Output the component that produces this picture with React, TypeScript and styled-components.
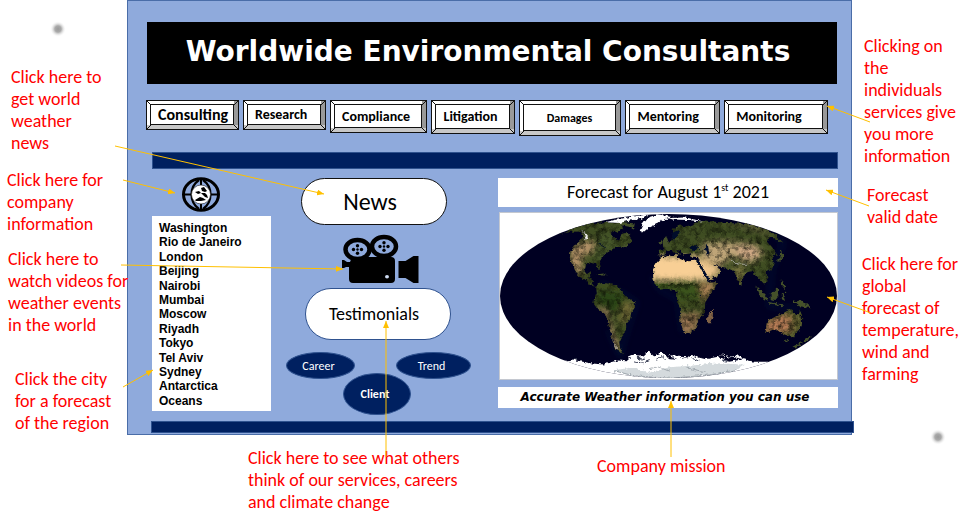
import React from "react";
import styled, { createGlobalStyle } from "styled-components";

const GlobalStyle = createGlobalStyle`
  *, *::before, *::after { box-sizing: border-box; }
  body { margin: 0; background: #fff; }
  button { font: inherit; cursor: pointer; }
`;

const humanist = `Carlito, Lato, sans-serif`;
const navy = "#002060";
const red = "#ff0000";

const Page = styled.div`
  position: relative;
  min-height: 100vh;
  overflow: hidden;
  font-family: ${humanist};
`;

const Upper = styled.div`
  display: grid;
  grid-template-columns: 127px minmax(0, 1fr) 121px;
`;

const NoteColumn = styled.aside<{ $top: number }>`
  position: relative;
  z-index: 1;
  padding-top: ${(p) => p.$top}px;
`;

const Note = styled.p<{ $indent?: number; $before?: number }>`
  margin: ${(p) => p.$before ?? 0}px 0 0 ${(p) => p.$indent ?? 0}px;
  color: ${red};
  font-size: 18px;
  line-height: 22px;
  white-space: pre;
`;

const Site = styled.main`
  display: flex;
  flex-direction: column;
  background: #8faadc;
  border: 1px solid #4a6da8;
  min-height: 435px;
`;

const Banner = styled.header`
  margin: 21px 14px 0 19px;
  background: #000;
  color: #fff;
  height: 62px;
  display: flex;
  align-items: center;
  justify-content: center;
`;

const Title = styled.h1`
  margin: 0 8px 2px 0;
  font: bold 28px/36px "DejaVu Sans", sans-serif;
  white-space: nowrap;
`;

const Services = styled.nav`
  display: flex;
  align-items: flex-start;
  gap: 4px;
  height: 68px;
  padding: 16px 23px 0 18px;
`;

const Bevel = styled.button<{ $grow: number; $height: number; $size: number; $center?: boolean }>`
  flex: ${(p) => p.$grow} 1 0;
  min-width: 0;
  height: ${(p) => p.$height}px;
  padding: 3px 4px 4px 3px;
  border: 1px solid #111;
  background:
    linear-gradient(to bottom right, transparent 42%, #111 42% 58%, transparent 58%) left bottom / 4px 4px no-repeat,
    linear-gradient(to top right, transparent 42%, #111 42% 58%, transparent 58%) right bottom / 4px 4px no-repeat,
    linear-gradient(to bottom right, transparent 42%, #111 42% 58%, transparent 58%) right top / 4px 4px no-repeat,
    linear-gradient(to top right, transparent 42%, #111 42% 58%, transparent 58%) left top / 4px 4px no-repeat,
    linear-gradient(#c8c8c8, #c8c8c8) left bottom / 100% 4px no-repeat,
    linear-gradient(#999, #999) right top / 4px 100% no-repeat,
    #fff;
  color: #000;

  span {
    display: flex;
    align-items: center;
    justify-content: ${(p) => (p.$center ? "center" : "flex-start")};
    height: 100%;
    padding: 0 7px;
    border: 1px solid #111;
    background: #fff;
    font-size: ${(p) => p.$size}px;
    font-weight: bold;
  }
`;

const Rule = styled.div<{ $height: number; $bleed?: boolean }>`
  height: ${(p) => p.$height}px;
  margin: ${(p) => (p.$bleed ? "0 -3px 1px 23px" : "0 13px 0 24px")};
  background: ${navy};
  border: 1px solid #2f528f;
`;

const Body = styled.div`
  display: grid;
  grid-template-columns: minmax(0, 119fr) minmax(0, 227fr) minmax(0, 340fr);
  margin: 0 13px 0 24px;
  padding-top: 8px;
  height: 252px;
`;

const Left = styled.section`
  display: flex;
  flex-direction: column;
`;

const GlobeButton = styled.button`
  display: block;
  align-self: center;
  margin: 0 21px 4px 0;
  padding: 0;
  border: 0;
  background: none;
  height: 35px;
`;

const Cities = styled.ul`
  display: flex;
  flex-direction: column;
  justify-content: space-between;
  height: 195px;
  margin: 0;
  padding: 5px 7px 3px;
  list-style: none;
  background: #fff;
  font: bold 12px/14px "Liberation Sans", Arial, sans-serif;
  a { color: #000; text-decoration: none; }
`;

const Middle = styled.section`
  display: flex;
  flex-direction: column;
  padding: 1px 27px 0 15px;
`;

const Stack = styled.div`
  display: flex;
  flex-direction: column;
  padding: 0 20px 0 15px;
`;

const Pill = styled.button<{ $size: number; $height: number; $end?: boolean }>`
  align-self: ${(p) => (p.$end ? "flex-end" : "flex-start")};
  width: 146px;
  height: ${(p) => p.$height}px;
  padding: 0 8px 0 0;
  border: 1px solid ${(p) => (p.$end ? "#2f528f" : "#111")};
  border-radius: 26px;
  background: #fff;
  color: #000;
  font-size: ${(p) => p.$size}px;
`;

const VideoButton = styled.button`
  padding: 0;
  margin: 9px 0 4px;
  border: 0;
  background: none;
  svg { display: block; width: 100%; height: 50px; }
`;

const Ovals = styled.div`
  display: grid;
  grid-template-columns: 69px 75px;
  justify-content: space-between;
  align-items: center;
  padding-top: 12px;
`;

const Oval = styled.button<{ $client?: boolean }>`
  height: ${(p) => (p.$client ? 42 : 27)}px;
  width: ${(p) => (p.$client ? "68px" : "100%")};
  ${(p) => p.$client && "grid-column: 1 / -1; justify-self: center; margin: -6px 3px 0 0;"}
  padding: 0 4px 0 0;
  border: 1px solid #2f528f;
  border-radius: 50%;
  background: ${navy};
  color: #fff;
  font-size: 12px;
  font-weight: ${(p) => (p.$client ? "bold" : "normal")};
`;

const Right = styled.section`
  display: flex;
  flex-direction: column;
  padding-top: 1px;
`;

const Forecast = styled.h2`
  margin: 0 0 5px;
  background: #fff;
  font-size: 18px;
  font-weight: normal;
  line-height: 29px;
  text-align: center;
  sup { font-size: 10px; line-height: 1px; }
`;

const MapFrame = styled.figure`
  margin: 0 0 7px 1px;
  height: 168px;
  background: #fff;
  border: 1px solid #c4c8d0;
  svg { display: block; width: 100%; height: 100%; }
`;

const Mission = styled.p`
  margin: 0;
  padding-right: 6px;
  background: #fff;
  font: italic bold 12px/21px "DejaVu Sans", sans-serif;
  text-align: center;
`;

const Lower = styled.footer`
  display: grid;
  grid-template-columns: 248fr 349fr 376fr;
  padding-top: 12px;
`;

const Pointers = styled.svg`
  position: absolute;
  left: 0;
  top: 0;
  width: 100%;
  height: 514px;
  pointer-events: none;
  z-index: 2;
`;

const services = [
  { name: "Consulting", grow: 93, height: 30, size: 16 },
  { name: "Research", grow: 82, height: 30, size: 14 },
  { name: "Compliance", grow: 98, height: 33, size: 14 },
  { name: "Litigation", grow: 82, height: 34, size: 14 },
  { name: "Damages", grow: 104, height: 36, size: 12, center: true },
  { name: "Mentoring", grow: 95, height: 34, size: 14 },
  { name: "Monitoring", grow: 105, height: 34, size: 14 },
];

const cities = [
  "Washington", "Rio de Janeiro", "London", "Beijing", "Nairobi", "Mumbai", "Moscow",
  "Riyadh", "Tokyo", "Tel Aviv", "Sydney", "Antarctica", "Oceans",
];

const Globe = () => (
  <svg width="40" height="35" viewBox="0 0 40 35" fill="none" stroke="#000" aria-hidden="true">
    <ellipse cx="20" cy="17.5" rx="17.5" ry="15.7" strokeWidth="3" />
    <path d="M20 2v31M2 17.500h36" strokeWidth="2" />
    <path d="M18 3C8 10 8 25 18 32M22 3c10 7 10 22 0 29" strokeWidth="2.200" />
    <circle cx="20" cy="17.500" r="9.500" fill="#fff" stroke="#222" strokeWidth=".6" />
    <path d="M14 15l4-1 2 2-3 1zM20 11l3-1 3 4-2 1-3-1zM20 16l4 0 2 2 1 3-3-1zM14 23l5-3 3 1 3 2-5 1-5 0z" fill="#000" stroke="none" />
  </svg>
);

const Reel = ({ x, y }: { x: number; y: number }) => (
  <g>
    <ellipse cx={x} cy={y} rx="12" ry="9.5" fill="none" stroke="#000" strokeWidth="4.500" />
    {[[0, 0, 1.2], [-4, 0, 1.7], [4, 0, 1.7], [0, -3.8, 1.7], [0, 3.8, 1.7]].map(([dx, dy, r]) => (
      <circle key={`${dx},${dy}`} cx={x + dx} cy={y + dy} r={r} />
    ))}
  </g>
);

const Camera = () => (
  <svg viewBox="301 233 150 50" aria-hidden="true">
    <Reel x={357.5} y={248.500} />
    <Reel x={384} y={245.500} />
    <path d="M352 256h39q4 0 4 4v18q0 4-4 4h-38q-4 0-4-4v-12h-3l-2 1h-2v-8h2l3 2h3z" />
    <path d="M398.500 260h7l8-5h5v27h-5l-8-5h-7z" />
    <ellipse cx="387" cy="275.700" rx="2" ry="1.700" fill="#cfdcf3" />
  </svg>
);

const WorldMap = () => (
  <svg viewBox="27 138 1020 504" preserveAspectRatio="none" role="img" aria-label="World map">
    <defs>
      <clipPath id="globe"><ellipse cx="537" cy="390" rx="510" ry="249" /></clipPath>
      <filter id="coast" x="0" y="0" width="100%" height="100%" colorInterpolationFilters="sRGB">
        <feTurbulence type="fractalNoise" baseFrequency=".09" numOctaves="3" seed="4" result="n" />
        <feDisplacementMap in="SourceGraphic" in2="n" scale="14" xChannelSelector="R" yChannelSelector="G" />
      </filter>
      <filter id="terrain" x="0" y="0" width="100%" height="100%" colorInterpolationFilters="sRGB">
        <feTurbulence type="fractalNoise" baseFrequency=".06" numOctaves="4" seed="9" result="n" />
        <feColorMatrix in="n" values="0 0 0 0 .04  0 0 0 0 .05  0 0 0 0 .02  1.600 0 0 0 -.62" result="s" />
        <feComposite in="s" in2="SourceGraphic" operator="in" result="t" />
        <feMerge><feMergeNode in="SourceGraphic" /><feMergeNode in="t" /></feMerge>
      </filter>
      <filter id="soft"><feGaussianBlur stdDeviation="9" /></filter>
      <clipPath id="land">
        <path d="M205 202L250 184 290 170 345 166 395 170 400 188 385 195 372 190 362 202 372 215 388 222 396 202 412 196 425 218 418 233 395 238 378 240 362 252 345 262 335 275 326 290 330 312 322 308 319 292 300 290 285 296 280 312 290 324 302 315 303 327 296 336 308 342 304 355 318 362 300 358 285 340 265 330 252 312 247 295 238 280 240 258 255 235 270 222 280 207 270 194 245 195Z" />
        <path d="M318 360L330 348 350 352 370 352 390 368 402 385 420 400 437 408 435 425 425 440 420 462 405 480 408 500 395 515 388 530 390 545 402 566 380 555 370 530 360 495 352 465 345 445 325 430 310 410 312 395 320 380Z" />
        <path d="M490 330L492 305 502 288 517 272 545 267 560 265 565 275 590 285 620 283 630 300 645 325 660 350 681 348 678 365 660 390 648 410 647 440 628 460 618 490 600 502 585 503 575 475 570 450 575 430 562 405 565 375 550 370 530 368 510 370 495 352Z" />
        <path d="M507 266L508 250 525 248 520 238 532 232 545 222 553 210 550 190 568 173 590 180 640 160 710 168 790 172 850 195 885 228 862 217 840 210 835 225 855 250 868 268 851 265 856 290 850 310 830 318 840 345 828 355 810 335 800 325 790 315 772 318 760 340 757 362 745 340 735 315 715 305 690 300 670 294 655 282 675 298 695 308 690 325 660 342 645 320 628 290 625 275 605 273 600 260 582 264 570 252 560 250 572 264 558 260 545 247 530 252 527 266Z" />
        <path d="M830 502L835 468 860 453 885 440 900 430 915 432 918 445 930 450 935 430 942 455 940 480 925 505 910 515 885 505 865 490Z" />
      </clipPath>
    </defs>
    <g clipPath="url(#globe)">
      <rect x="27" y="138" width="1020" height="504" fill="#000022" />
      <g fill="none" stroke="#10284c" strokeWidth="7" opacity=".6" filter="url(#soft)">
        <path d="M330 348L402 385 440 410 405 515 390 570 355 495" />
        <path d="M487 330L510 370 565 400 580 500" />
        <path d="M850 195L885 230 870 265 850 310 840 420 935 430" />
      </g>
      <g filter="url(#coast)">
        <g filter="url(#terrain)">
          <g clipPath="url(#land)">
            <rect x="27" y="138" width="1020" height="504" fill="#3f4d22" />
            <g filter="url(#soft)">
              <path d="M240 240L280 225 320 220 310 250 275 270 275 330 240 310Z" fill="#b8946a" />
              <path d="M310 220L345 205 390 205 360 260 305 290Z" fill="#46582a" />
              <path d="M325 370L405 385 395 430 350 440 320 410Z" fill="#2b4513" />
              <path d="M400 410L440 410 415 470 385 475Z" fill="#736c38" />
              <path d="M320 425L350 440 375 520 400 566 365 540 345 460Z" fill="#c09474" />
              <path d="M480 350H650L640 400H560L500 380Z" fill="#3b521e" />
              <path d="M630 350H685L645 410Z" fill="#b6885b" />
              <path d="M565 445L640 440 610 510 570 505Z" fill="#9a7652" />
              <path d="M640 230L700 225 780 230 830 260 790 290 730 270 690 305 635 280Z" fill="#bfa578" />
              <path d="M730 240L800 235 820 260 770 285Z" fill="#d0a985" />
              <path d="M730 300L765 300 765 360 735 335Z" fill="#837b44" />
              <path d="M700 164L800 172 865 212 820 198Z" fill="#6b6840" />
              <path d="M825 475L880 445 935 460 900 500 830 505Z" fill="#b87c56" />
              <path d="M905 440L945 450 935 505 905 515Z" fill="#6a6835" />
            </g>
            <path d="M275 192L290 210 282 218" fill="none" stroke="#eee" strokeWidth="5" />
          </g>
        </g>
        <g clipPath="url(#land)">
          <g filter="url(#soft)">
            <path d="M480 268H622L662 343H480Z" fill="#f8cf95" />
            <path d="M625 272L665 284 700 310 660 345Z" fill="#eec58c" />
          </g>
          <path d="M725 280L745 293 780 294" fill="none" stroke="#ccc" strokeWidth="2" />
          <path d="M350 475L364 520 382 552" fill="none" stroke="#e0d4cc" strokeWidth="2" />
        </g>
        <g fill="#45512a">
          <path d="M653 473L655 448 672 432 671 452 662 473Z" fill="#816346" />
          <path d="M516 235L522 215 530 205 535 220 544 238 530 242ZM506 228L516 222 515 233Z" />
          <path d="M803 358L820 375 838 400 830 404 812 384ZM838 408L862 412 885 416 882 421 845 416ZM846 386L868 364 870 388 858 402 846 398ZM880 382L893 380 885 390 890 405 880 400ZM877 342L885 350 890 370 880 358Z" />
          <path d="M910 402L925 406 940 402 955 416 968 427 950 424 932 421Z" />
          <path d="M861 282L875 275 878 255 884 268 877 282ZM873 250L882 250 878 257Z" />
          <path d="M318 325L340 322 350 328 335 328ZM385 239L405 232 418 236 408 243Z" />
          <path d="M912 544L940 530 944 533 920 546ZM944 526L965 512 970 516 950 530ZM885 525L900 520 895 530Z" />
          <path d="M375 172L395 165 435 170 432 185 418 180ZM405 192L422 202 412 210Z" />
        </g>
        <g fill="#000c2b">
          <path d="M600 240L615 236 630 246 612 252ZM647 236L657 238 660 260 655 268 648 252ZM620 280L628 282 664 344 654 346Z" />
          <path d="M325 230L340 235 350 245 338 240ZM545 200L565 190 570 197 552 225ZM629 388L635 386 635 395Z" />
        </g>
        <g fill="#fff">
          <path d="M450 192L462 165 475 152 505 142 545 150 512 164 500 172 475 184 460 197Z" />
          <path d="M345 166L380 158 435 148 480 142 460 155 410 163 390 168ZM535 153L590 152 640 164 595 159 550 158Z" />
          <path d="M205 592L245 583 300 594 340 598 385 586 410 588 430 570 448 578 470 565 495 570 520 560 535 578 570 582 610 572 650 582 690 574 720 590 765 582 795 590 860 590V650H205Z" />
          <path d="M410 577L430 568 460 574 475 556 490 571ZM535 570L565 582 600 573ZM690 566L720 577 750 570 765 582Z" />
        </g>
        <path d="M370 616L430 606 480 622 540 606 610 601 690 594 768 599 740 617 660 632 540 642 430 635Z" fill="#d4dadd" />
        <path d="M370 616L430 632 540 640 660 630 740 614M480 611L505 604 540 619M590 608L650 621" fill="none" stroke="#879097" strokeWidth="2" />
        <path d="M440 574l12 8 12-4M500 582l18-8 10 10M250 578l14 6M610 580l20 6M700 584l16 4M430 590l30 4 20-8" fill="none" stroke="#30364e" strokeWidth="3" />
      </g>
    </g>
  </svg>
);

const lines = [
  "M115 146L324 194",
  "M123 180L175 193",
  "M121 265L343 269",
  "M123 387L153 370",
  "M386 457V321",
  "M671 457V401",
  "M870 122L827 106",
  "M869 206L826 190",
  "M871 313L827 297",
];

const App = () => (
  <>
    <GlobalStyle />
    <Page>
      <Upper>
        <NoteColumn $top={66}>
          <Note $indent={11}>{"Click here to\nget world\nweather\nnews"}</Note>
          <Note $indent={7} $before={15}>{"Click here for\ncompany\ninformation"}</Note>
          <Note $indent={8} $before={13}>{"Click here to\nwatch videos for\nweather events\nin the world"}</Note>
          <Note $indent={15} $before={32}>{"Click the city\nfor a forecast\nof the region"}</Note>
        </NoteColumn>
        <Site>
          <Banner><Title>Worldwide Environmental Consultants</Title></Banner>
          <Services>
            {services.map((s) => (
              <Bevel key={s.name} $grow={s.grow} $height={s.height} $size={s.size} $center={s.center}>
                <span>{s.name}</span>
              </Bevel>
            ))}
          </Services>
          <Rule $height={17} />
          <Body>
            <Left>
              <GlobeButton aria-label="Company information"><Globe /></GlobeButton>
              <Cities>
                {cities.map((c) => <li key={c}><a href="#forecast">{c}</a></li>)}
              </Cities>
            </Left>
            <Middle>
              <Stack>
                <Pill $size={24} $height={47}>News</Pill>
                <VideoButton aria-label="Weather videos"><Camera /></VideoButton>
                <Pill $size={18} $height={52} $end>Testimonials</Pill>
              </Stack>
              <Ovals>
                <Oval>Career</Oval>
                <Oval>Trend</Oval>
                <Oval $client>Client</Oval>
              </Ovals>
            </Middle>
            <Right id="forecast">
              <Forecast>Forecast for August 1<sup>st</sup> 2021</Forecast>
              <MapFrame><WorldMap /></MapFrame>
              <Mission>Accurate Weather information you can use</Mission>
            </Right>
          </Body>
          <Rule $height={12} $bleed />
        </Site>
        <NoteColumn $top={35}>
          <Note $indent={12}>{"Clicking on\nthe\nindividuals\nservices give\nyou more\ninformation"}</Note>
          <Note $indent={15} $before={17}>{"Forecast\nvalid date"}</Note>
          <Note $indent={10} $before={25}>{"Click here for\nglobal\nforecast of\ntemperature,\nwind and\nfarming"}</Note>
        </NoteColumn>
      </Upper>
      <Lower>
        <span />
        <Note>{"Click here to see what others\nthink of our services, careers\nand climate change"}</Note>
        <Note $before={8}>Company mission</Note>
      </Lower>
      <Pointers viewBox="0 0 973 514" preserveAspectRatio="none" aria-hidden="true">
        <defs>
          <marker id="tip" markerWidth="7" markerHeight="6" refX="7" refY="3" orient="auto" markerUnits="userSpaceOnUse">
            <path d="M0 0L7 3 0 6Z" fill="#ffc000" />
          </marker>
          <radialGradient id="dot">
            <stop offset="0" stopColor="#999" />
            <stop offset=".4" stopColor="#aaa" />
            <stop offset="1" stopColor="#fff" stopOpacity="0" />
          </radialGradient>
        </defs>
        <circle cx="58" cy="29" r="8" fill="url(#dot)" />
        <circle cx="938" cy="437" r="8" fill="url(#dot)" />
        {lines.map((d) => <path key={d} d={d} fill="none" stroke="#ffc000" markerEnd="url(#tip)" />)}
      </Pointers>
    </Page>
  </>
);

export default App;
